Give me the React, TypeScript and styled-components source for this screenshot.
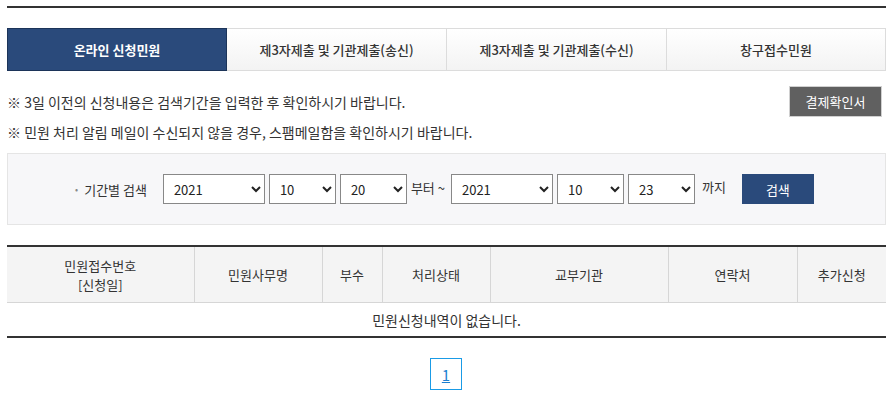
import { useState } from "react"
import styled, { createGlobalStyle } from "styled-components";

const GlobalStyle = createGlobalStyle`
  html, body {
    margin: 0;
    padding: 0;
    background: #fff;
    font-family: "Noto Sans CJK KR", "Noto Sans", sans-serif;
    color: #333;
  }
`

const tabs = ["온라인 신청민원", "제3자제출 및 기관제출(송신)", "제3자제출 및 기관제출(수신)", "창구접수민원"];
const years = ["2019", "2020", "2021"];
const months = Array.from({ length: 12 }, (_, i) => String(i + 1));
const days = Array.from({ length: 31 }, (_, i) => String(i + 1));

const columns = [
    { label: "민원접수번호\n[신청일]", width: 187 },
    { label: "민원사무명", width: 128 },
    { label: "부수", width: 60 },
    { label: "처리상태", width: 108 },
    { label: "교부기관", width: 178 },
    { label: "연락처", width: 129 },
    { label: "추가신청", width: 89 },
];

function App() {
    const [active, setActive] = useState(0);
    const [from, setFrom] = useState({ y: "2021", m: "10", d: "20" });
    const [to, setTo] = useState({ y: "2021", m: "10", d: "23" });

    return (
        <>
            <GlobalStyle />
            <Page>
                <TopLine />
                <Tabs>
                    {tabs.map((t, i) => (
                        <Tab key={t} $active={active === i} onClick={() => setActive(i)}>{t}</Tab>
                    ))}
                </Tabs>
                <NoticeRow>
                    <Notice>※ 3일 이전의 신청내용은 검색기간을 입력한 후 확인하시기 바랍니다.</Notice>
                    <GrayButton>결제확인서</GrayButton>
                </NoticeRow>
                <Notice>※ 민원 처리 알림 메일이 수신되지 않을 경우, 스팸메일함을 확인하시기 바랍니다.</Notice>

                <SearchBox>
                    <SearchLabel>기간별 검색</SearchLabel>
                    <Select $w={102} value={from.y} onChange={(e) => setFrom({ ...from, y: e.target.value })}>
                        {years.map((v) => <option key={v}>{v}</option>)}
                    </Select>
                    <Select $w={67} value={from.m} onChange={(e) => setFrom({ ...from, m: e.target.value })}>
                        {months.map((v) => <option key={v}>{v}</option>)}
                    </Select>
                    <Select $w={67} value={from.d} onChange={(e) => setFrom({ ...from, d: e.target.value })}>
                        {days.map((v) => <option key={v}>{v}</option>)}
                    </Select>
                    <Word>부터 ~</Word>
                    <Select $w={102} value={to.y} onChange={(e) => setTo({ ...to, y: e.target.value })}>
                        {years.map((v) => <option key={v}>{v}</option>)}
                    </Select>
                    <Select $w={67} value={to.m} onChange={(e) => setTo({ ...to, m: e.target.value })}>
                        {months.map((v) => <option key={v}>{v}</option>)}
                    </Select>
                    <Select $w={67} value={to.d} onChange={(e) => setTo({ ...to, d: e.target.value })}>
                        {days.map((v) => <option key={v}>{v}</option>)}
                    </Select>
                    <Word $up>까지</Word>
                    <SearchButton>검색</SearchButton>
                </SearchBox>

                <Table>
                    <colgroup>
                        {columns.map((c) => <col key={c.label} style={{ width: c.width }} />)}
                    </colgroup>
                    <thead>
                        <tr>
                            {columns.map((c) => <Th key={c.label}>{c.label}</Th>)}
                        </tr>
                    </thead>
                    <tbody>
                        <tr>
                            <Td colSpan={7}>민원신청내역이 없습니다.</Td>
                        </tr>
                    </tbody>
                </Table>

                <Paging>
                    <PageNum href="#">1</PageNum>
                </Paging>
            </Page>
        </>
    )
}

const Page = styled.div`
  width: 879px;
  padding: 6px 6px 0 7px;
  font-size: 13px;
`

const TopLine = styled.div`
  height: 2px;
  background: #333;
  margin-bottom: 20px;
`

const Tabs = styled.div`
  display: grid;
  grid-template-columns: 220px 220px 220px 219px;
  height: 43px;
`

const Tab = styled.div<{ $active: boolean }>`
  display: flex;
  align-items: center;
  justify-content: center;
  font-size: 13px;
  font-weight: ${(p) => (p.$active ? 700 : 500)};
  color: ${(p) => (p.$active ? "#fff" : "#333")};
  background: ${(p) => (p.$active ? "#2a4a7b" : "linear-gradient(#fff, #f3f3f3)")};
  border: 1px solid ${(p) => (p.$active ? "#1c3459" : "#dcdcdc")};
  border-left-width: ${(p) => (p.$active ? "1px" : "0")};
  cursor: pointer;
`

const NoticeRow = styled.div`
  display: flex;
  justify-content: space-between;
  align-items: center;
  margin-top: 15px;
  padding-right: 4px;
`

const Notice = styled.p`
  margin: 0;
  font-size: 14px;
  line-height: 30px;
  color: #333;
  & + & {
    margin-top: 1px;
  }
`

const GrayButton = styled.button`
  width: 93px;
  height: 31px;
  border: 1px solid #d0d0d0;
  background: #606060;
  color: #fff;
  font-family: inherit;
  font-size: 13px;
  cursor: pointer;
`

const SearchBox = styled.div`
  margin-top: 6px;
  height: 70px;
  display: flex;
  align-items: center;
  justify-content: center;
  gap: 4px;
  background: #f7f7f9;
  border: 1px solid #e5e5e5;
  padding-right: 4px;
`

const SearchLabel = styled.span`
  margin-right: 12px;
  &::before {
    content: "•";
    color: #888;
    font-size: 9px;
    margin-right: 6px;
    vertical-align: 2px;
  }
`

const Select = styled.select<{ $w: number }>`
  width: ${(p) => p.$w}px;
  height: 30px;
  border: 1px solid #888;
  background: #fff;
  font-family: inherit;
  font-size: 13px;
  color: #222;
  padding: 0 6px;
`

const Word = styled.span<{ $up?: boolean }>`
  margin: 0 ${(p) => (p.$up ? "12px" : "2px")} ${(p) => (p.$up ? "6px" : "4px")} ${(p) => (p.$up ? "3px" : "0")};
`

const SearchButton = styled.button`
  width: 72px;
  height: 30px;
  border: 0;
  background: #2a4a7b;
  color: #fff;
  font-family: inherit;
  font-size: 13px;
  cursor: pointer;
`

const Table = styled.table`
  width: 100%;
  margin-top: 20px;
  border-collapse: collapse;
  table-layout: fixed;
  border-top: 2px solid #333;
  border-bottom: 2px solid #333;
`

const Th = styled.th`
  height: 55px;
  padding: 0;
  background: #f4f4f4;
  border-left: 1px solid #d6d6d6;
  border-bottom: 1px solid #d6d6d6;
  font-weight: 400;
  font-size: 13px;
  color: #333;
  line-height: 19px;
  white-space: pre-line;
  &:first-child {
    border-left: 0;
  }
`

const Td = styled.td`
  height: 33px;
  padding: 0;
  text-align: center;
  font-size: 14px;
  color: #333;
`

const Paging = styled.div`
  display: flex;
  justify-content: center;
  margin-top: 20px;
  padding-right: 1px;
`

const PageNum = styled.a`
  box-sizing: border-box;
  width: 32px;
  height: 32px;
  display: flex;
  align-items: center;
  justify-content: center;
  border: 1px solid #1a9be6;
  color: #1a7fd0;
  font-size: 15px;
  text-decoration: underline;
`

export default App
